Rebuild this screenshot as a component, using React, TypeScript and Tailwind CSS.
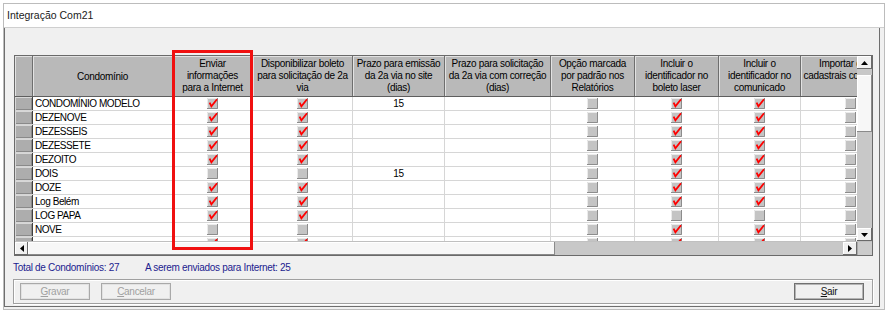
import React from "react";

type Row = { name: string; e: boolean; d: boolean; p: string; l: boolean; c: boolean };

const rows: Row[] = [
  { name: "CONDOMÍNIO MODELO", e: true, d: true, p: "15", l: true, c: true },
  { name: "DEZENOVE", e: true, d: true, p: "", l: true, c: true },
  { name: "DEZESSEIS", e: true, d: true, p: "", l: true, c: true },
  { name: "DEZESSETE", e: true, d: true, p: "", l: true, c: true },
  { name: "DEZOITO", e: true, d: true, p: "", l: true, c: true },
  { name: "DOIS", e: false, d: false, p: "15", l: true, c: true },
  { name: "DOZE", e: true, d: true, p: "", l: true, c: true },
  { name: "Log Belém", e: true, d: true, p: "", l: true, c: true },
  { name: "LOG PAPA", e: true, d: true, p: "", l: false, c: false },
  { name: "NOVE", e: false, d: false, p: "", l: true, c: true },
  { name: "", e: true, d: true, p: "", l: true, c: true },
];

const headers = [
  { w: "w-[80px]", lines: ["Enviar", "informações", "para a Internet"] },
  { w: "w-[100px]", lines: ["Disponibilizar boleto", "para solicitação de 2a", "via"] },
  { w: "w-[92px]", lines: ["Prazo para emissão", "da 2a via no site", "(dias)"] },
  { w: "w-[106px]", lines: ["Prazo para solicitação", "da 2a via com correção", "(dias)"] },
  { w: "w-[84px]", lines: ["Opção marcada", "por padrão nos", "Relatórios"] },
  { w: "w-[84px]", lines: ["Incluir o", "identificador no", "boleto laser"] },
  { w: "w-[82px]", lines: ["Incluir o", "identificador no", "comunicado"] },
  { w: "w-[100px]", lines: ["Importar dados", "cadastrais condomínio", ""] },
];

function Box({ on }: { on: boolean }) {
  return (
    <svg width="11" height="11" viewBox="0 0 11 11" className="overflow-visible">
      <rect x="0" y="0" width="11" height="11" fill="#c4c4c4" />
      <path d="M0.5 10V0.5H10" stroke="#ebebeb" fill="none" />
      <path d="M0 10.5H10.5V0" stroke="#8c8c8c" fill="none" />
      {on && <path d="M2.6 4.6L4.4 8.4L10 1.2" stroke="#ff0000" strokeWidth="1.8" fill="none" />}
    </svg>
  );
}

function Arrow({ dir }: { dir: "up" | "down" | "left" | "right" }) {
  const d = {
    up: "M0 4h7L3.5 0z",
    down: "M0 0h7L3.5 4z",
    left: "M4 0v7L0 3.5z",
    right: "M0 0v7L4 3.5z",
  }[dir];
  const size = dir === "up" || dir === "down" ? { width: 7, height: 4 } : { width: 4, height: 7 };
  return (
    <svg {...size}>
      <path d={d} fill="#000" />
    </svg>
  );
}

const btn3d = "bg-[#f0f0f0] shadow-[inset_-1px_-1px_0_#6a6a6a,inset_1px_1px_0_#ffffff] flex items-center justify-center shrink-0";

function Cell({ w, children, left }: { w: string; children?: React.ReactNode; left?: boolean }) {
  return (
    <div className={`${w} shrink-0 h-full border-r border-[#d6d6d6] flex items-center ${left ? "justify-start pl-[2px] tracking-[-0.45px]" : "justify-center"}`}>
      {children}
    </div>
  );
}

export default function App() {
  return (
    <div className="relative w-[886px] h-[313px] bg-white pl-[3px] pr-[1px] pt-[3px] pb-[3px] font-['Liberation_Sans',Arial,sans-serif] text-[10px] tracking-[-0.3px] text-black">
      <div className="h-full flex flex-col border border-[#bcbcbc] bg-[#f0f0f0]">
        <div className="h-[24px] shrink-0 bg-white border-b border-[#cfcfcf] flex items-center pl-[3px] text-[10.5px] tracking-normal text-[#1a1a1a]">
          Integração Com21
        </div>

        <div className="flex-1 mr-[4px] mb-[2px] border-l border-r border-b border-[#6e6e6e] pl-[9px] pr-[6px] pt-[27px] flex flex-col">
          {/* grid */}
          <div className="w-[859px] h-[201px] shrink-0 flex flex-col border border-[#6a6a6a] bg-white">
            <div className="h-[185px] flex">
              <div className="flex-1 overflow-hidden flex flex-col">
                <div className="h-[41px] shrink-0 flex border-b border-[#5e5e5e]">
                  <div className="w-[18px] shrink-0 h-full bg-[#b4b4b4] border-r border-[#6e6e6e] shadow-[inset_1px_1px_0_#e2e2e2]" />
                  <div className="w-[140px] shrink-0 h-full bg-[#b9b9b9] border-r border-[#6e6e6e] shadow-[inset_1px_1px_0_#e2e2e2] flex items-center justify-center">
                    Condomínio
                  </div>
                  {headers.map((h, i) => (
                    <div
                      key={i}
                      className={`${h.w} shrink-0 h-full bg-[#b9b9b9] border-r border-[#6e6e6e] shadow-[inset_1px_1px_0_#e2e2e2] flex flex-col items-center justify-center leading-[12px] whitespace-nowrap overflow-hidden`}
                    >
                      {h.lines.map((l, j) => (
                        <span key={j} className="h-[12px]">{l}</span>
                      ))}
                    </div>
                  ))}
                </div>
                {rows.map((r, i) => (
                  <div key={i} className="h-[14px] shrink-0 flex border-b border-[#d6d6d6]">
                    <div className="w-[18px] shrink-0 h-full bg-[#adadad] border-r border-[#404040] shadow-[inset_1px_1px_0_#d8d8d8,inset_-1px_-1px_0_#8a8a8a]" />
                    <Cell w="w-[140px]" left>{r.name}</Cell>
                    <Cell w="w-[80px]"><Box on={r.e} /></Cell>
                    <Cell w="w-[100px]"><Box on={r.d} /></Cell>
                    <Cell w="w-[92px]">{r.p}</Cell>
                    <Cell w="w-[106px]" />
                    <Cell w="w-[84px]"><Box on={false} /></Cell>
                    <Cell w="w-[84px]"><Box on={r.l} /></Cell>
                    <Cell w="w-[82px]"><Box on={r.c} /></Cell>
                    <Cell w="w-[100px]"><Box on={false} /></Cell>
                  </div>
                ))}
              </div>
              {/* vertical scrollbar */}
              <div className="w-[15px] shrink-0 flex flex-col bg-[#c8c8c8]">
                <div className={`${btn3d} h-[13px]`}><Arrow dir="up" /></div>
                <div className="h-[6px] shrink-0" />
                <div className="h-[57px] shrink-0 bg-[#f7f7f7] shadow-[inset_-1px_-1px_0_#8a8a8a,inset_1px_1px_0_#ffffff]" />
                <div className="flex-1" />
                <div className={`${btn3d} h-[13px]`}><Arrow dir="down" /></div>
              </div>
            </div>
            {/* horizontal scrollbar */}
            <div className="h-[14px] shrink-0 flex border-t border-[#c0c0c0] bg-[#c8c8c8]">
              <div className={`${btn3d} w-[13px]`}><Arrow dir="left" /></div>
              <div className="w-[527px] shrink-0 bg-[#f7f7f7] shadow-[inset_-1px_-1px_0_#8a8a8a,inset_1px_1px_0_#ffffff]" />
              <div className="flex-1" />
              <div className={`${btn3d} w-[14px]`}><Arrow dir="right" /></div>
              <div className="w-[15px] shrink-0 bg-[#cbcbcb] border-l border-[#a8a8a8]" />
            </div>
          </div>

          {/* totals */}
          <div className="h-[13px] mt-[5px] flex items-center text-[#1c1c8f] -ml-px">
            <span className="w-[132px]">Total de Condomínios: 27</span>
            <span>A serem enviados para Internet: 25</span>
          </div>

          {/* buttons */}
          <div className="mt-[5px] -ml-px w-[860px] h-[25px] border border-[#a0a0a0] shadow-[inset_1px_1px_0_#ffffff,1px_1px_0_#ffffff] flex items-start pt-[3px] pl-[6px] pr-[8px]">
            <button className="w-[70px] h-[17px] border border-[#a9a9a9] shadow-[inset_0_0_0_1px_#e2e2e2] bg-[#f0f0f0] text-[#a0a0a0] flex items-center justify-center">
              <span><u>G</u>ravar</span>
            </button>
            <button className="ml-[11px] w-[70px] h-[17px] border border-[#a9a9a9] shadow-[inset_0_0_0_1px_#e2e2e2] bg-[#f0f0f0] text-[#a0a0a0] flex items-center justify-center">
              <span><u>C</u>ancelar</span>
            </button>
            <button className="ml-auto w-[70px] h-[17px] border border-[#707070] shadow-[inset_0_0_0_1px_#b4b4b4] bg-[#f0f0f0] text-[#111] flex items-center justify-center">
              <span><u>S</u>air</span>
            </button>
          </div>
        </div>
      </div>

      {/* highlight */}
      <div className="absolute left-[172px] top-[50px] w-[81px] h-[200px] border-[3px] border-[#f01010] pointer-events-none" />
    </div>
  );
}
